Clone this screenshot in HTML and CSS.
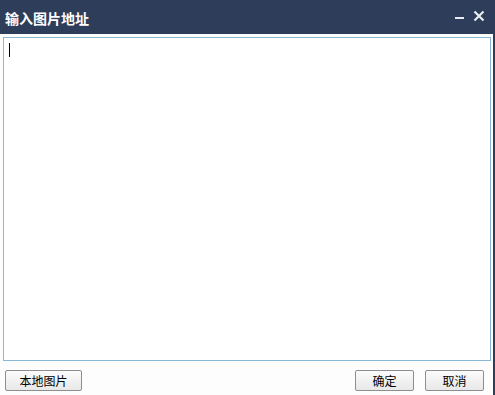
FILE: index.html
```html
<!DOCTYPE html>
<html>
<head>
<meta charset="utf-8">
<link rel="stylesheet" href="styles.css">
</head>
<body>
<div class="dialog">
  <div class="titlebar">
    <span class="title">输入图片地址</span>
    <div class="tools">
      <svg class="ico" width="10" height="10" viewBox="0 0 10 10"><rect x="0" y="6" width="9" height="2" fill="#e8ecf2"/></svg>
      <svg class="ico" width="12" height="12" viewBox="0 0 12 12"><path d="M1.5 1.5 L10.5 10.5 M10.5 1.5 L1.5 10.5" stroke="#e8ecf2" stroke-width="2.2"/></svg>
    </div>
  </div>
  <div class="body">
    <div class="area"><span class="caret"></span></div>
    <div class="footer">
      <button class="btn btn-local">本地图片</button>
      <div class="right">
        <button class="btn">确定</button>
        <button class="btn">取消</button>
      </div>
    </div>
  </div>
</div>
</body>
</html>
```
FILE: styles.css
```css
html, body { margin: 0; padding: 0; background: #fff; }
body { font-family: "Noto Sans CJK SC", "Liberation Sans", sans-serif; }
.dialog {
  width: 493px; height: 395px;
  border-right: 2px solid #2e3d5a;
  display: flex; flex-direction: column;
  background: #fdfdfd;
}
.titlebar {
  height: 36px; background: #2e3d5a;
  display: flex; align-items: center; justify-content: space-between;
  padding: 0 8px 0 5px;
}
.title { color: #fff; font-weight: bold; font-size: 14px; letter-spacing: 0; margin-top: 1px; }
.tools { display: flex; align-items: center; gap: 8px; margin-top: -3px; }
.ico { display: block; }
.body { flex: 1; display: flex; flex-direction: column; padding: 3px 2px 4px 3px; }
.area {
  height: 322px; border: 1px solid #87b8d8; background: #fff;
  position: relative;
}
.caret { position: absolute; left: 5px; top: 5px; width: 1px; height: 14px; background: #000; }
.footer { display: flex; justify-content: space-between; align-items: center; margin-top: 9px; padding: 0 7px 0 2px; }
.right { display: flex; gap: 11px; }
.btn {
  width: 59px; height: 21px; padding: 0;
  border: 1px solid #8e8e8e; border-radius: 2px;
  background: linear-gradient(#fbfbfb, #e8e8e8);
  font-family: "Noto Sans CJK SC", sans-serif; font-size: 12px; color: #000;
  line-height: 19px;
}
.btn-local { width: 77px; }
```
